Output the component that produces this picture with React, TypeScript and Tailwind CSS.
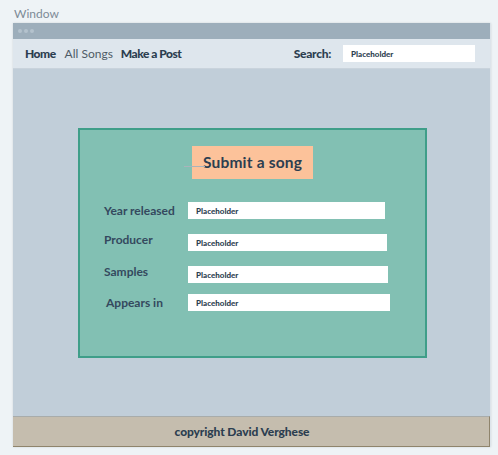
import React from "react";

const font = { fontFamily: "Lato, 'Open Sans', sans-serif" };

function Field({ label, labelClass, inputClass }: { label: string; labelClass: string; inputClass: string }) {
  return (
    <div className="flex items-start">
      <div className={`w-[84px] shrink-0 text-[12px] font-bold text-[#34495e] leading-none ${labelClass}`}>{label}</div>
      <div className={`h-[17px] bg-white flex items-center pl-[8px] ${inputClass}`}>
        <span className="text-[8px] font-black text-[#2c3e50] leading-none">Placeholder</span>
      </div>
    </div>
  );
}

export default function App() {
  return (
    <div className="w-[498px] h-[455px] bg-[#eef3f6] overflow-hidden" style={font}>
      <div className="pl-[14px] pt-[8px] h-[23px] text-[12px] leading-none text-[#7d8b97]">Window</div>
      <div className="ml-[13px] w-[478px] h-[424px] flex flex-col border-r border-[#dde4ea] shadow-[0_0_2px_rgba(0,0,0,0.12)]">
        <div className="h-[16px] bg-[#9daebb] flex items-center gap-[2px] pl-[5px]">
          <span className="w-[4px] h-[4px] rounded-full bg-[#b4c2cd]" />
          <span className="w-[4px] h-[4px] rounded-full bg-[#b4c2cd]" />
          <span className="w-[4px] h-[4px] rounded-full bg-[#b4c2cd]" />
        </div>
        <div className="h-[30px] bg-[#dee6ed] border-b border-[#c9d3dc] flex items-center pl-[12px] pr-[15px] text-[12px] text-[#2c3e50]">
          <span className="font-black tracking-[-0.5px]">Home</span>
          <span className="ml-[9px] text-[#4f5b66]">All Songs</span>
          <span className="ml-[8px] font-black tracking-[-0.5px]">Make a Post</span>
          <span className="ml-auto font-black tracking-[-0.3px]">Search:</span>
          <div className="ml-[12px] w-[132px] h-[17px] bg-white flex items-center pl-[8px]">
            <span className="text-[8px] font-black leading-none">Placeholder</span>
          </div>
        </div>
        <div className="flex-1 bg-[#c1ced9] pt-[59px] pl-[65px]">
          <div className="w-[349px] h-[230px] bg-[#82c0b3] border-2 border-[#3f9e89] flex flex-col">
            <div className="relative mt-[16px] self-center w-[121px] h-[33px] bg-[#fcc29a] flex items-center justify-center">
              <span className="text-[15.5px] font-bold text-[#2c3e50] tracking-[0.2px]">Submit a song</span>
              <span className="absolute left-[-8px] top-[20px] w-[21px] h-px bg-[#a9b4bb]" />
            </div>
            <div className="pl-[24px] mt-[23px] flex flex-col">
              <Field label="Year released" labelClass="mt-[3px]" inputClass="w-[197px]" />
              <div className="mt-[15px]">
                <Field label="Producer" labelClass="mt-[0px]" inputClass="w-[199px]" />
              </div>
              <div className="mt-[15px]">
                <Field label="Samples" labelClass="mt-[0px]" inputClass="w-[200px]" />
              </div>
              <div className="mt-[11px]">
                <Field label="Appears in" labelClass="mt-[3px] pl-[2px]" inputClass="w-[202px]" />
              </div>
            </div>
          </div>
        </div>
        <div className="h-[31px] bg-[#c5bdae] border-t border-[#a8acab] border-r border-b border-r-[#8f846c] border-b-[#8f846c] flex items-center justify-center pr-[18px]">
          <span className="text-[12px] font-black text-[#2c3e50] tracking-[-0.1px]">copyright David Verghese</span>
        </div>
      </div>
    </div>
  );
}
